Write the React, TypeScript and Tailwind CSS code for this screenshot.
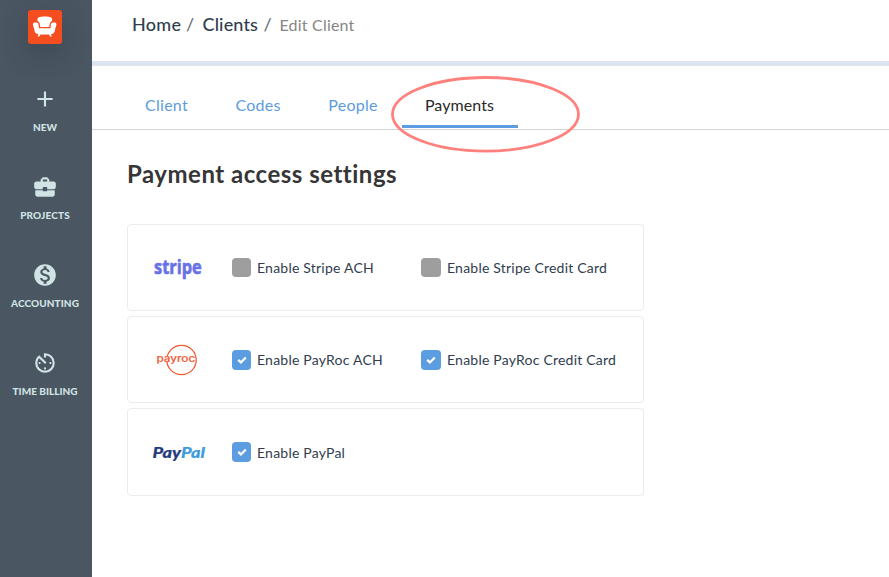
import type { ReactNode } from 'react';
import { MdAdd, MdAvTimer, MdBusinessCenter, MdMonetizationOn } from 'react-icons/md';

const NAV = [
  { label: 'NEW', icon: MdAdd, track: 'tracking-[-0.1px]' },
  { label: 'PROJECTS', icon: MdBusinessCenter, track: 'tracking-[0.15px]' },
  { label: 'ACCOUNTING', icon: MdMonetizationOn, track: 'tracking-[0.1px]' },
  { label: 'TIME BILLING', icon: MdAvTimer, track: 'tracking-[0px]' },
];

const TABS = [
  { label: 'Client', width: 'w-[90px]' },
  { label: 'Codes', width: 'w-[93px]' },
  { label: 'People', width: 'w-[97px]' },
  { label: 'Payments', width: 'w-[116px]', active: true },
];

function ChairLogo() {
  return (
    <svg viewBox="0 0 34 34" className="h-[34px] w-[34px]" fill="#fff">
      <path d="M9.4 9.4 C9.6 7.6 11 6.6 16.8 6.6 C22.6 6.6 24 7.6 24.2 9.4 C24.3 10.6 23.6 11.4 22.8 12 C21.8 13 21.5 14.4 21.2 17 H12.3 C12 14.4 11.7 13 10.8 12 C10 11.4 9.3 10.6 9.4 9.4 Z" />
      <path d="M5 14.2 C5 12.9 6 12.5 8 12.5 C10 12.5 10.5 13.4 10.6 15.2 L10.9 18.3 H22.5 L22.8 15.2 C22.9 13.4 23.4 12.5 25.4 12.5 C27.4 12.5 28.4 12.9 28.4 14.2 C28.4 16.2 27.5 17.4 27.1 19.5 C26.7 22.4 25.8 24 23 24.1 L23.8 26.6 H22.2 L20.9 24.4 H12.5 L11.2 26.6 H9.6 L10.4 24.1 C7.6 24 6.7 22.4 6.3 19.5 C5.9 17.4 5 16.2 5 14.2 Z" />
    </svg>
  );
}

function StripeLogo() {
  return (
    <svg className="overflow-visible" width="56" height="44" viewBox="0 0 56 44">
      <g transform="translate(4 28) scale(0.86 1)">
        <text
          textLength="55.5"
          lengthAdjust="spacingAndGlyphs"
          className="font-['Open_Sans',sans-serif] text-[19px] font-bold"
          fill="#6772e5"
          stroke="#6772e5"
          strokeWidth="0.6"
        >
          stripe
        </text>
      </g>
    </svg>
  );
}

function PayrocLogo() {
  return (
    <svg width="56" height="34" viewBox="0 0 56 34">
      <circle cx="31.5" cy="17" r="14.7" fill="none" stroke="#f05a32" strokeWidth="1.3" />
      <path d="M16 16H20" stroke="#fff" strokeWidth="6" />
      <text
        x="6.5"
        y="18.6"
        textLength="38.7"
        lengthAdjust="spacingAndGlyphs"
        className="font-['Inter',sans-serif] text-[9.2px] font-medium"
        fill="#f05a32"
        stroke="#f05a32"
        strokeWidth="0.15"
      >
        payroc
      </text>
    </svg>
  );
}

function PaypalLogo() {
  return (
    <svg width="56" height="30" viewBox="0 0 56 30">
      <text
        x="2.5"
        y="19.8"
        textLength="52.5"
        lengthAdjust="spacingAndGlyphs"
        className="font-['Lato',sans-serif] text-[15.5px] font-black italic"
        strokeWidth="0.2"
      >
        <tspan fill="#253b80" stroke="#253b80">Pay</tspan>
        <tspan fill="#3f9bdc" stroke="#3f9bdc">Pal</tspan>
      </text>
    </svg>
  );
}

function Checkbox({ label, checked, wide, raised }: { label: string; checked?: boolean; wide?: boolean; raised?: boolean }) {
  return (
    <label className="flex items-center">
      <span
        className={`flex shrink-0 items-center justify-center rounded-[4px] ${wide ? 'w-[20px]' : 'w-[19px]'} ${
          checked ? 'h-[20px] bg-[#5c9ce0]' : 'h-[19px] bg-[#9e9e9e]'
        } ${raised ? 'mb-[2px]' : ''}`}
      >
        {checked && (
          <svg width="10" height="8" viewBox="0 0 10 8" fill="none" stroke="#fff" strokeWidth="2.2">
            <path d="M1.2 3.9 3.9 6.4 8.8 1.4" />
          </svg>
        )}
      </span>
      <span className="ml-[6px] text-[14px] leading-5 tracking-[0.22px] whitespace-nowrap text-[#303d4e]">{label}</span>
    </label>
  );
}

function ProviderCard({ logo, children, tall }: { logo: ReactNode; children: ReactNode; tall?: boolean }) {
  return (
    <div className={`flex items-center rounded-[4px] border border-[#ececec] pl-[22px] ${tall ? 'h-[88px] pt-px' : 'h-[87px]'}`}>
      <div className="w-[82px]">{logo}</div>
      <div className="grid grid-cols-[189px_1fr]">{children}</div>
    </div>
  );
}

export default function App() {
  return (
    <div className="flex h-[577px] w-[889px] overflow-hidden bg-white font-['Lato',sans-serif]">
      <aside className="flex w-[92px] shrink-0 flex-col bg-[#4a5661] pt-[10px]">
        <div className="ml-[28px] w-[34px] rounded-[3px] bg-[#f44d20] shadow-[0_10px_24px_2px_rgba(40,50,60,0.3)]">
          <ChairLogo />
        </div>
        <nav className="mt-[42px] flex w-[90px] flex-col">
          {NAV.map(({ label, icon: Icon, track }) => (
            <a key={label} className="flex h-[88px] flex-col items-center text-[#d0e3e5]">
              <Icon className="h-[26px] w-[26px]" />
              <span className={`mt-[9px] text-[10px] leading-[12px] font-black whitespace-nowrap ${track}`}>{label}</span>
            </a>
          ))}
        </nav>
      </aside>

      <main className="min-w-0 flex-1">
        <header className="flex h-[66px] items-baseline border-b-[5px] border-[#dbe4ef] pt-[11px] pl-[40px] leading-[26px] whitespace-nowrap">
          <span className="w-[54px] text-[18px] font-medium tracking-[0.3px] text-[#303d4e]">Home</span>
          <span className="w-[16.5px] text-[18px] text-[#5e6873]">/</span>
          <span className="w-[61px] text-[18px] font-medium tracking-[0.15px] text-[#303d4e]">Clients</span>
          <span className="w-[16px] text-[18px] text-[#5e6873]">/</span>
          <span className="text-[16px] tracking-[0.2px] text-[#858585]">Edit Client</span>
        </header>

        <div className="relative flex h-[64px] items-end border-b border-[#d4d4d4] pb-px pl-[29.5px]">
          {TABS.map((tab) => (
            <a
              key={tab.label}
              className={`flex h-[39px] justify-center border-b-[3px] text-[16px] leading-[32px] ${tab.width} ${
                tab.active ? 'border-[#5c9ce0] tracking-[0.1px] text-[#292929]' : 'border-transparent tracking-[0.25px] text-[#5c9ce0]'
              }`}
            >
              {tab.label}
            </a>
          ))}
          {/* Highlight around the active tab */}
          <svg className="absolute top-[9px] left-[298px]" width="191" height="78" fill="none">
            <ellipse cx="95.5" cy="39.3" rx="93" ry="36.8" stroke="#ff817d" strokeWidth="2.8" />
          </svg>
        </div>

        <section className="w-[552px] pl-[35px]">
          <h1 className="pt-[28px] text-[24px] leading-[32px] font-bold tracking-[0.5px] whitespace-nowrap text-[#363636]">
            Payment access settings
          </h1>
          <div className="mt-[34px] flex flex-col gap-[5px]">
            <ProviderCard logo={<StripeLogo />}>
              <Checkbox label="Enable Stripe ACH" />
              <Checkbox label="Enable Stripe Credit Card" wide />
            </ProviderCard>
            <ProviderCard logo={<PayrocLogo />}>
              <Checkbox label="Enable PayRoc ACH" checked />
              <Checkbox label="Enable PayRoc Credit Card" checked wide />
            </ProviderCard>
            <ProviderCard logo={<PaypalLogo />} tall>
              <Checkbox label="Enable PayPal" checked raised />
            </ProviderCard>
          </div>
        </section>
      </main>
    </div>
  );
}
